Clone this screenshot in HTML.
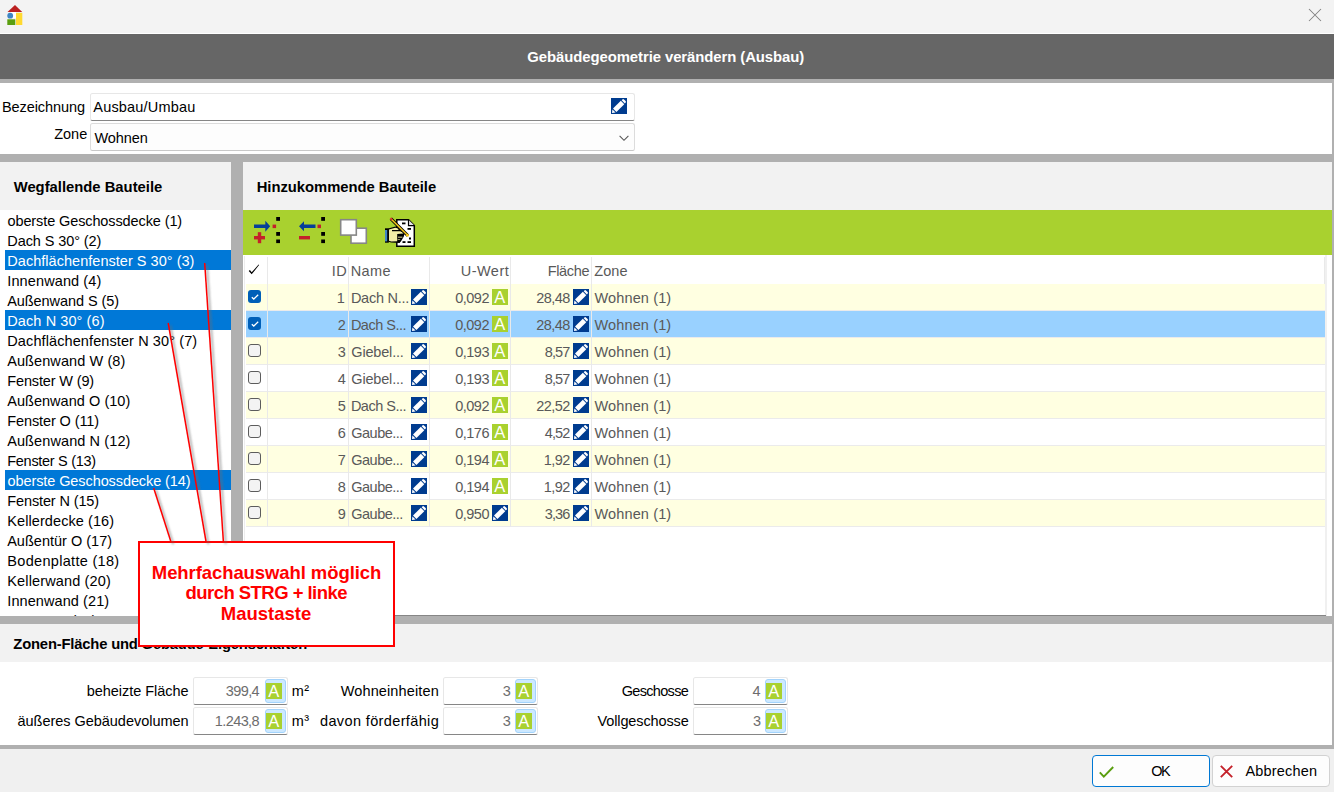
<!DOCTYPE html><html lang="de"><head><meta charset="utf-8"><title>Gebäudegeometrie verändern (Ausbau)</title><style>
*{box-sizing:border-box}
html,body{margin:0;padding:0}
body{width:1334px;height:792px;position:relative;overflow:hidden;background:#b0b0b0;font-family:"Liberation Sans",sans-serif;font-size:14.5px;color:#000}
.abs{position:absolute}
.t{position:absolute;white-space:nowrap;line-height:20px}
.ic{width:16px;height:16px;display:block;position:absolute}
.inp{position:absolute;background:#fff;border:1px solid #e7e7e7;border-bottom:1px solid #868686;border-radius:2.5px}
.hl{position:absolute;left:5px;width:226px;height:20px;background:#0078d7}
.tr{position:absolute;left:246px;width:1079px;height:27px;border-bottom:1px solid #ebebeb}
.tr.o{background:#ffffe1}
.tr.sel{background:#99d1ff}
.vl{position:absolute;width:1px;background:#e9e9e9}
.cb{position:absolute;left:2px;top:6px;width:13px;height:13px;border-radius:3px}
.cb.on{background:#005fb8}
.cb.off{background:#f3f3f3;border:1px solid #5c5c5c}
.abtn{position:absolute;width:21px;height:24px;background:#cce8ff;border:1px solid #a3d3fb;border-radius:3px}
</style></head><body>
<div class="abs" style="left:0;top:0;width:1334px;height:33px;background:#f3f3f3"></div>
<div class="abs" style="left:0;top:33px;width:1334px;height:1px;background:#fff"></div>
<svg class="abs" style="left:7px;top:5px" width="16" height="20" viewBox="0 0 16 20"><polygon points="8,0 15.2,7 0.5,7" fill="#bb2020"/><rect x="0.3" y="7" width="15.4" height="13" fill="#f3f3f3"/><rect x="3" y="7" width="6" height="6" fill="#fff"/><circle cx="3.2" cy="10.7" r="2.9" fill="#3f86c4"/><rect x="0.3" y="14.3" width="8" height="5.7" fill="#5a9e0f"/><rect x="9" y="7.8" width="6.3" height="12.2" fill="#ffd92f"/></svg>
<svg class="abs" style="left:1308px;top:8px" width="14" height="14" viewBox="0 0 14 14"><path d="M1 1 L13 13 M13 1 L1 13" stroke="#808080" stroke-width="1.05" fill="none"/></svg>
<div class="abs" style="left:0;top:34px;width:1334px;height:45px;background:#666"></div>
<div class="t" style="left:527.3px;top:47px;letter-spacing:-0.08px;font-size:14.9px;font-weight:bold;color:#fff">Gebäudegeometrie verändern (Ausbau)</div>
<div class="abs" style="left:0;top:83px;width:1332px;height:71px;background:#fff"></div>
<div class="t" style="left:2.0px;top:97px;letter-spacing:-0.08px">Bezeichnung</div>
<div class="t" style="left:54.2px;top:124px">Zone</div>
<div class="inp" style="left:90px;top:93px;width:545px;height:28px"></div>
<div class="abs" style="left:611px;top:98px"><svg class="ic" viewBox="0 0 16 16"><rect width="16" height="16" fill="#003c8f"/><g transform="rotate(45 8 8)" fill="#fff"><rect x="5.6" y="3" width="4.85" height="11.1"/><path d="M5.75 15.1 H10.25 L8 17.85 Z"/><path d="M5.8 2 V1 Q5.8 -0.1 6.9 -0.1 H9.2 Q10.3 -0.1 10.3 1 V2 Z"/></g></svg></div>
<div class="t" style="left:93.3px;top:97px;letter-spacing:0.19px">Ausbau/Umbau</div>
<div class="inp" style="left:90px;top:123px;width:545px;height:28px;background:#fdfdfd;border-color:#dcdcdc;border-bottom-color:#c9c9c9"></div>
<svg class="abs" style="left:619px;top:134.5px" width="10" height="7" viewBox="0 0 10 7"><path d="M0.6 0.9 L5 5.3 L9.4 0.9" stroke="#555" stroke-width="1.1" fill="none"/></svg>
<div class="t" style="left:94.5px;top:128px;letter-spacing:-0.10px">Wohnen</div>
<div class="abs" style="left:0;top:162px;width:231px;height:48px;background:#f2f2f2"></div>
<div class="t" style="left:13.7px;top:176.5px;font-size:14.8px;font-weight:bold">Wegfallende Bauteile</div>
<div class="abs" style="left:0;top:210px;width:231px;height:406px;background:#fff"></div>
<div class="hl" style="top:250px"></div>
<div class="hl" style="top:310px"></div>
<div class="hl" style="top:470px"></div>
<div class="t" style="left:7.5px;top:211px;letter-spacing:-0.11px">oberste Geschossdecke (1)</div>
<div class="t" style="left:7.3px;top:231px;letter-spacing:-0.09px">Dach S 30° (2)</div>
<div class="t" style="left:7.3px;top:251px;letter-spacing:0.03px;color:#fff">Dachflächenfenster S 30° (3)</div>
<div class="t" style="left:7.3px;top:271px;letter-spacing:0.11px">Innenwand (4)</div>
<div class="t" style="left:7.2px;top:291px;letter-spacing:-0.06px">Außenwand S (5)</div>
<div class="t" style="left:7.3px;top:311px;letter-spacing:0.09px;color:#fff">Dach N 30° (6)</div>
<div class="t" style="left:7.3px;top:331px;letter-spacing:0.10px">Dachflächenfenster N 30° (7)</div>
<div class="t" style="left:7.2px;top:351px;letter-spacing:0.09px">Außenwand W (8)</div>
<div class="t" style="left:7.3px;top:371px;letter-spacing:-0.15px">Fenster W (9)</div>
<div class="t" style="left:7.2px;top:391px;letter-spacing:0.04px">Außenwand O (10)</div>
<div class="t" style="left:7.3px;top:411px;letter-spacing:-0.11px">Fenster O (11)</div>
<div class="t" style="left:7.2px;top:431px;letter-spacing:0.10px">Außenwand N (12)</div>
<div class="t" style="left:7.3px;top:451px;letter-spacing:-0.30px">Fenster S (13)</div>
<div class="t" style="left:7.5px;top:471px;letter-spacing:-0.09px;color:#fff">oberste Geschossdecke (14)</div>
<div class="t" style="left:7.3px;top:491px;letter-spacing:-0.13px">Fenster N (15)</div>
<div class="t" style="left:7.3px;top:511px;letter-spacing:0.08px">Kellerdecke (16)</div>
<div class="t" style="left:7.2px;top:531px;letter-spacing:0.01px">Außentür O (17)</div>
<div class="t" style="left:7.3px;top:551px;letter-spacing:0.31px">Bodenplatte (18)</div>
<div class="t" style="left:7.3px;top:571px;letter-spacing:0.14px">Kellerwand (20)</div>
<div class="t" style="left:7.3px;top:591px;letter-spacing:0.08px">Innenwand (21)</div>
<div class="abs" style="left:0;top:606px;width:231px;height:10px;overflow:hidden"><div class="t" style="left:7.3px;top:4.5px;letter-spacing:-0.26px">Fenster S (22)</div></div>
<div class="abs" style="left:243px;top:162px;width:1089px;height:48px;background:#f2f2f2"></div>
<div class="t" style="left:256.7px;top:176.5px;letter-spacing:-0.03px;font-size:14.8px;font-weight:bold">Hinzukommende Bauteile</div>
<div class="abs" style="left:243px;top:210px;width:1089px;height:45px;background:#a9d12f"></div>
<svg class="abs" style="left:250px;top:214px" width="172" height="36" viewBox="250 214 172 36">
<g fill="#000"><rect x="276.2" y="217" width="3.8" height="3.8"/><rect x="276.2" y="232" width="3.8" height="3.8"/><rect x="276.2" y="239.5" width="3.8" height="3.6"/>
<rect x="321.2" y="217" width="3.8" height="3.8"/><rect x="321.2" y="232" width="3.8" height="3.8"/><rect x="321.2" y="239.5" width="3.8" height="3.6"/></g>
<g fill="#c4212a"><rect x="272.6" y="224.6" width="3.5" height="3.5"/><rect x="317.5" y="224.6" width="3.5" height="3.5"/>
<rect x="254" y="236" width="11" height="3.4"/><rect x="257.8" y="232.2" width="3.4" height="11"/>
<rect x="299" y="236" width="11" height="3.4"/></g>
<g fill="#063f99"><path d="M254 224.6 H265.3 V220.8 L270.2 226.3 L265.3 231.8 V228.1 H254 Z"/>
<path d="M315.5 224.6 H304 V221.3 L299 226.3 L304 231.3 V228.1 H315.5 Z"/></g>
<rect x="351" y="228.2" width="15.3" height="15" fill="#fff" stroke="#878787" stroke-width="1.6"/>
<rect x="340.7" y="219.7" width="15.6" height="15.4" fill="#fff" stroke="#878787" stroke-width="1.6"/>
<path d="M396.8 219.8 H408.5 L414.3 225.6 V246.3 H396.8 Z" fill="#fff" stroke="#000" stroke-width="1.5"/>
<path d="M408.5 219.8 V225.6 H414.3" fill="#e8e8e8" stroke="#000" stroke-width="1.2"/>
<g fill="#000"><rect x="402" y="222.5" width="3.5" height="1.8"/><rect x="407.5" y="228" width="3.5" height="1.8"/><rect x="409" y="237.5" width="2" height="2"/><rect x="402.5" y="241.2" width="3" height="1.8"/><rect x="407.5" y="241.2" width="3.5" height="1.8"/></g>
<path d="M388.2 228.5 L395.4 226.5 L398 227.2 L400.6 230 L404.4 232.2 L404.4 234.3 L403.7 236.8 L402.2 239.2 L401 241.2 L399.6 242.9 L391 242.6 L388.2 241.5 Z" fill="#000"/>
<path d="M389 229.6 L395.3 227.7 L397.4 228.3 L398.8 229.9 L392 229.9 L392 231.3 L400.2 231.3 L403.4 232.8 L403.4 233.6 L397.2 233.9 L397.2 241.2 L391.3 241.5 L389 240.7 Z" fill="#f3eea6"/>
<rect x="398" y="236.7" width="4.4" height="0.9" fill="#f3eea6"/>
<rect x="397.6" y="239" width="2.6" height="0.7" fill="#d8d494"/>
<rect x="385" y="228.3" width="3.8" height="14.4" fill="#000"/><rect x="385" y="230" width="2.2" height="11.4" fill="#3f86c4"/>
<path d="M390.8 218.6 L407.8 235.6" stroke="#000" stroke-width="3.2"/>
<path d="M390.4 218.2 L407 234.8" stroke="#f5c71a" stroke-width="1.6"/>
<path d="M390.4 218.2 L392.2 220" stroke="#d63a2a" stroke-width="1.9"/>
<circle cx="407.4" cy="235.2" r="1.5" fill="#f5c71a"/>
</svg>
<div class="abs" style="left:246px;top:255px;width:1086px;height:361px;background:#fff"></div>
<div class="abs" style="left:243px;top:255px;width:3px;height:361px;background:#fff"></div><div class="vl" style="left:244px;top:256px;height:360px;background:#ececec"></div>
<svg class="abs" style="left:248px;top:263px" width="12" height="12" viewBox="248 262.7 12 12"><path d="M248.7 270.6 L249.9 269.6 L251.7 272 L258.6 264.3 L259.1 264.8 L251.7 274 Z" fill="#000"/></svg>
<div class="t" style="left:331.7px;top:261px;letter-spacing:0.57px;color:#595959">ID</div>
<div class="t" style="left:350.7px;top:261px;letter-spacing:0.40px;color:#595959">Name</div>
<div class="t" style="left:460.7px;top:261px;letter-spacing:0.48px;color:#595959">U-Wert</div>
<div class="t" style="left:547.7px;top:261px;letter-spacing:-0.33px;color:#595959">Fläche</div>
<div class="t" style="left:594.2px;top:261px;letter-spacing:0.10px;color:#595959">Zone</div>
<div class="tr o" style="top:284px">
<div class="cb on"><svg class="abs" style="left:3px;top:4px" width="8" height="6" viewBox="0 0 8 6"><path d="M0.8 3.2 L2.8 5 L7.2 0.8" stroke="#fff" stroke-width="1.3" fill="none"/></svg></div>
<div class="abs" style="left:165px;top:5px"><svg class="ic" viewBox="0 0 16 16"><rect width="16" height="16" fill="#003c8f"/><g transform="rotate(45 8 8)" fill="#fff"><rect x="5.6" y="3" width="4.85" height="11.1"/><path d="M5.75 15.1 H10.25 L8 17.85 Z"/><path d="M5.8 2 V1 Q5.8 -0.1 6.9 -0.1 H9.2 Q10.3 -0.1 10.3 1 V2 Z"/></g></svg></div>
<div class="abs" style="left:246px;top:5px"><svg class="ic" viewBox="0 0 16 16"><rect width="16" height="16" fill="#a9d12f"/><text x="7.7" y="13.6" text-anchor="middle" font-family="Liberation Sans, sans-serif" font-size="16.5" fill="#fff">A</text></svg></div>
<div class="abs" style="left:327px;top:5px"><svg class="ic" viewBox="0 0 16 16"><rect width="16" height="16" fill="#003c8f"/><g transform="rotate(45 8 8)" fill="#fff"><rect x="5.6" y="3" width="4.85" height="11.1"/><path d="M5.75 15.1 H10.25 L8 17.85 Z"/><path d="M5.8 2 V1 Q5.8 -0.1 6.9 -0.1 H9.2 Q10.3 -0.1 10.3 1 V2 Z"/></g></svg></div>
</div>
<div class="t" style="left:336.8px;top:288px;color:#595959">1</div>
<div class="t" style="left:350.9px;top:288px;letter-spacing:-0.25px;color:#595959">Dach N...</div>
<div class="t" style="left:455.3px;top:288px;letter-spacing:-0.53px;color:#595959">0,092</div>
<div class="t" style="left:536.3px;top:288px;letter-spacing:-0.56px;color:#595959">28,48</div>
<div class="t" style="left:594.5px;top:288px;letter-spacing:0.13px;color:#595959">Wohnen (1)</div>
<div class="tr sel" style="top:311px">
<div class="cb on"><svg class="abs" style="left:3px;top:4px" width="8" height="6" viewBox="0 0 8 6"><path d="M0.8 3.2 L2.8 5 L7.2 0.8" stroke="#fff" stroke-width="1.3" fill="none"/></svg></div>
<div class="abs" style="left:165px;top:5px"><svg class="ic" viewBox="0 0 16 16"><rect width="16" height="16" fill="#003c8f"/><g transform="rotate(45 8 8)" fill="#fff"><rect x="5.6" y="3" width="4.85" height="11.1"/><path d="M5.75 15.1 H10.25 L8 17.85 Z"/><path d="M5.8 2 V1 Q5.8 -0.1 6.9 -0.1 H9.2 Q10.3 -0.1 10.3 1 V2 Z"/></g></svg></div>
<div class="abs" style="left:246px;top:5px"><svg class="ic" viewBox="0 0 16 16"><rect width="16" height="16" fill="#a9d12f"/><text x="7.7" y="13.6" text-anchor="middle" font-family="Liberation Sans, sans-serif" font-size="16.5" fill="#fff">A</text></svg></div>
<div class="abs" style="left:327px;top:5px"><svg class="ic" viewBox="0 0 16 16"><rect width="16" height="16" fill="#003c8f"/><g transform="rotate(45 8 8)" fill="#fff"><rect x="5.6" y="3" width="4.85" height="11.1"/><path d="M5.75 15.1 H10.25 L8 17.85 Z"/><path d="M5.8 2 V1 Q5.8 -0.1 6.9 -0.1 H9.2 Q10.3 -0.1 10.3 1 V2 Z"/></g></svg></div>
</div>
<div class="t" style="left:337.8px;top:315px;color:#595959">2</div>
<div class="t" style="left:350.9px;top:315px;letter-spacing:-0.50px;color:#595959">Dach S...</div>
<div class="t" style="left:455.3px;top:315px;letter-spacing:-0.53px;color:#595959">0,092</div>
<div class="t" style="left:536.3px;top:315px;letter-spacing:-0.56px;color:#595959">28,48</div>
<div class="t" style="left:594.5px;top:315px;letter-spacing:0.13px;color:#595959">Wohnen (1)</div>
<div class="tr o" style="top:338px">
<div class="cb off"></div>
<div class="abs" style="left:165px;top:5px"><svg class="ic" viewBox="0 0 16 16"><rect width="16" height="16" fill="#003c8f"/><g transform="rotate(45 8 8)" fill="#fff"><rect x="5.6" y="3" width="4.85" height="11.1"/><path d="M5.75 15.1 H10.25 L8 17.85 Z"/><path d="M5.8 2 V1 Q5.8 -0.1 6.9 -0.1 H9.2 Q10.3 -0.1 10.3 1 V2 Z"/></g></svg></div>
<div class="abs" style="left:246px;top:5px"><svg class="ic" viewBox="0 0 16 16"><rect width="16" height="16" fill="#a9d12f"/><text x="7.7" y="13.6" text-anchor="middle" font-family="Liberation Sans, sans-serif" font-size="16.5" fill="#fff">A</text></svg></div>
<div class="abs" style="left:327px;top:5px"><svg class="ic" viewBox="0 0 16 16"><rect width="16" height="16" fill="#003c8f"/><g transform="rotate(45 8 8)" fill="#fff"><rect x="5.6" y="3" width="4.85" height="11.1"/><path d="M5.75 15.1 H10.25 L8 17.85 Z"/><path d="M5.8 2 V1 Q5.8 -0.1 6.9 -0.1 H9.2 Q10.3 -0.1 10.3 1 V2 Z"/></g></svg></div>
</div>
<div class="t" style="left:337.8px;top:342px;color:#595959">3</div>
<div class="t" style="left:351.3px;top:342px;letter-spacing:-0.18px;color:#595959">Giebel...</div>
<div class="t" style="left:455.3px;top:342px;letter-spacing:-0.53px;color:#595959">0,193</div>
<div class="t" style="left:544.7px;top:342px;letter-spacing:-0.85px;color:#595959">8,57</div>
<div class="t" style="left:594.5px;top:342px;letter-spacing:0.13px;color:#595959">Wohnen (1)</div>
<div class="tr" style="top:365px">
<div class="cb off"></div>
<div class="abs" style="left:165px;top:5px"><svg class="ic" viewBox="0 0 16 16"><rect width="16" height="16" fill="#003c8f"/><g transform="rotate(45 8 8)" fill="#fff"><rect x="5.6" y="3" width="4.85" height="11.1"/><path d="M5.75 15.1 H10.25 L8 17.85 Z"/><path d="M5.8 2 V1 Q5.8 -0.1 6.9 -0.1 H9.2 Q10.3 -0.1 10.3 1 V2 Z"/></g></svg></div>
<div class="abs" style="left:246px;top:5px"><svg class="ic" viewBox="0 0 16 16"><rect width="16" height="16" fill="#a9d12f"/><text x="7.7" y="13.6" text-anchor="middle" font-family="Liberation Sans, sans-serif" font-size="16.5" fill="#fff">A</text></svg></div>
<div class="abs" style="left:327px;top:5px"><svg class="ic" viewBox="0 0 16 16"><rect width="16" height="16" fill="#003c8f"/><g transform="rotate(45 8 8)" fill="#fff"><rect x="5.6" y="3" width="4.85" height="11.1"/><path d="M5.75 15.1 H10.25 L8 17.85 Z"/><path d="M5.8 2 V1 Q5.8 -0.1 6.9 -0.1 H9.2 Q10.3 -0.1 10.3 1 V2 Z"/></g></svg></div>
</div>
<div class="t" style="left:337.8px;top:369px;color:#595959">4</div>
<div class="t" style="left:351.3px;top:369px;letter-spacing:-0.18px;color:#595959">Giebel...</div>
<div class="t" style="left:455.3px;top:369px;letter-spacing:-0.53px;color:#595959">0,193</div>
<div class="t" style="left:544.7px;top:369px;letter-spacing:-0.85px;color:#595959">8,57</div>
<div class="t" style="left:594.5px;top:369px;letter-spacing:0.13px;color:#595959">Wohnen (1)</div>
<div class="tr o" style="top:392px">
<div class="cb off"></div>
<div class="abs" style="left:165px;top:5px"><svg class="ic" viewBox="0 0 16 16"><rect width="16" height="16" fill="#003c8f"/><g transform="rotate(45 8 8)" fill="#fff"><rect x="5.6" y="3" width="4.85" height="11.1"/><path d="M5.75 15.1 H10.25 L8 17.85 Z"/><path d="M5.8 2 V1 Q5.8 -0.1 6.9 -0.1 H9.2 Q10.3 -0.1 10.3 1 V2 Z"/></g></svg></div>
<div class="abs" style="left:246px;top:5px"><svg class="ic" viewBox="0 0 16 16"><rect width="16" height="16" fill="#a9d12f"/><text x="7.7" y="13.6" text-anchor="middle" font-family="Liberation Sans, sans-serif" font-size="16.5" fill="#fff">A</text></svg></div>
<div class="abs" style="left:327px;top:5px"><svg class="ic" viewBox="0 0 16 16"><rect width="16" height="16" fill="#003c8f"/><g transform="rotate(45 8 8)" fill="#fff"><rect x="5.6" y="3" width="4.85" height="11.1"/><path d="M5.75 15.1 H10.25 L8 17.85 Z"/><path d="M5.8 2 V1 Q5.8 -0.1 6.9 -0.1 H9.2 Q10.3 -0.1 10.3 1 V2 Z"/></g></svg></div>
</div>
<div class="t" style="left:337.8px;top:396px;color:#595959">5</div>
<div class="t" style="left:350.9px;top:396px;letter-spacing:-0.50px;color:#595959">Dach S...</div>
<div class="t" style="left:455.3px;top:396px;letter-spacing:-0.53px;color:#595959">0,092</div>
<div class="t" style="left:536.3px;top:396px;letter-spacing:-0.56px;color:#595959">22,52</div>
<div class="t" style="left:594.5px;top:396px;letter-spacing:0.13px;color:#595959">Wohnen (1)</div>
<div class="tr" style="top:419px">
<div class="cb off"></div>
<div class="abs" style="left:165px;top:5px"><svg class="ic" viewBox="0 0 16 16"><rect width="16" height="16" fill="#003c8f"/><g transform="rotate(45 8 8)" fill="#fff"><rect x="5.6" y="3" width="4.85" height="11.1"/><path d="M5.75 15.1 H10.25 L8 17.85 Z"/><path d="M5.8 2 V1 Q5.8 -0.1 6.9 -0.1 H9.2 Q10.3 -0.1 10.3 1 V2 Z"/></g></svg></div>
<div class="abs" style="left:246px;top:5px"><svg class="ic" viewBox="0 0 16 16"><rect width="16" height="16" fill="#a9d12f"/><text x="7.7" y="13.6" text-anchor="middle" font-family="Liberation Sans, sans-serif" font-size="16.5" fill="#fff">A</text></svg></div>
<div class="abs" style="left:327px;top:5px"><svg class="ic" viewBox="0 0 16 16"><rect width="16" height="16" fill="#003c8f"/><g transform="rotate(45 8 8)" fill="#fff"><rect x="5.6" y="3" width="4.85" height="11.1"/><path d="M5.75 15.1 H10.25 L8 17.85 Z"/><path d="M5.8 2 V1 Q5.8 -0.1 6.9 -0.1 H9.2 Q10.3 -0.1 10.3 1 V2 Z"/></g></svg></div>
</div>
<div class="t" style="left:337.8px;top:423px;color:#595959">6</div>
<div class="t" style="left:351.3px;top:423px;letter-spacing:-0.51px;color:#595959">Gaube...</div>
<div class="t" style="left:455.3px;top:423px;letter-spacing:-0.53px;color:#595959">0,176</div>
<div class="t" style="left:544.7px;top:423px;letter-spacing:-0.85px;color:#595959">4,52</div>
<div class="t" style="left:594.5px;top:423px;letter-spacing:0.13px;color:#595959">Wohnen (1)</div>
<div class="tr o" style="top:446px">
<div class="cb off"></div>
<div class="abs" style="left:165px;top:5px"><svg class="ic" viewBox="0 0 16 16"><rect width="16" height="16" fill="#003c8f"/><g transform="rotate(45 8 8)" fill="#fff"><rect x="5.6" y="3" width="4.85" height="11.1"/><path d="M5.75 15.1 H10.25 L8 17.85 Z"/><path d="M5.8 2 V1 Q5.8 -0.1 6.9 -0.1 H9.2 Q10.3 -0.1 10.3 1 V2 Z"/></g></svg></div>
<div class="abs" style="left:246px;top:5px"><svg class="ic" viewBox="0 0 16 16"><rect width="16" height="16" fill="#a9d12f"/><text x="7.7" y="13.6" text-anchor="middle" font-family="Liberation Sans, sans-serif" font-size="16.5" fill="#fff">A</text></svg></div>
<div class="abs" style="left:327px;top:5px"><svg class="ic" viewBox="0 0 16 16"><rect width="16" height="16" fill="#003c8f"/><g transform="rotate(45 8 8)" fill="#fff"><rect x="5.6" y="3" width="4.85" height="11.1"/><path d="M5.75 15.1 H10.25 L8 17.85 Z"/><path d="M5.8 2 V1 Q5.8 -0.1 6.9 -0.1 H9.2 Q10.3 -0.1 10.3 1 V2 Z"/></g></svg></div>
</div>
<div class="t" style="left:337.8px;top:450px;color:#595959">7</div>
<div class="t" style="left:351.3px;top:450px;letter-spacing:-0.51px;color:#595959">Gaube...</div>
<div class="t" style="left:455.3px;top:450px;letter-spacing:-0.53px;color:#595959">0,194</div>
<div class="t" style="left:543.7px;top:450px;letter-spacing:-0.52px;color:#595959">1,92</div>
<div class="t" style="left:594.5px;top:450px;letter-spacing:0.13px;color:#595959">Wohnen (1)</div>
<div class="tr" style="top:473px">
<div class="cb off"></div>
<div class="abs" style="left:165px;top:5px"><svg class="ic" viewBox="0 0 16 16"><rect width="16" height="16" fill="#003c8f"/><g transform="rotate(45 8 8)" fill="#fff"><rect x="5.6" y="3" width="4.85" height="11.1"/><path d="M5.75 15.1 H10.25 L8 17.85 Z"/><path d="M5.8 2 V1 Q5.8 -0.1 6.9 -0.1 H9.2 Q10.3 -0.1 10.3 1 V2 Z"/></g></svg></div>
<div class="abs" style="left:246px;top:5px"><svg class="ic" viewBox="0 0 16 16"><rect width="16" height="16" fill="#a9d12f"/><text x="7.7" y="13.6" text-anchor="middle" font-family="Liberation Sans, sans-serif" font-size="16.5" fill="#fff">A</text></svg></div>
<div class="abs" style="left:327px;top:5px"><svg class="ic" viewBox="0 0 16 16"><rect width="16" height="16" fill="#003c8f"/><g transform="rotate(45 8 8)" fill="#fff"><rect x="5.6" y="3" width="4.85" height="11.1"/><path d="M5.75 15.1 H10.25 L8 17.85 Z"/><path d="M5.8 2 V1 Q5.8 -0.1 6.9 -0.1 H9.2 Q10.3 -0.1 10.3 1 V2 Z"/></g></svg></div>
</div>
<div class="t" style="left:337.8px;top:477px;color:#595959">8</div>
<div class="t" style="left:351.3px;top:477px;letter-spacing:-0.51px;color:#595959">Gaube...</div>
<div class="t" style="left:455.3px;top:477px;letter-spacing:-0.53px;color:#595959">0,194</div>
<div class="t" style="left:543.7px;top:477px;letter-spacing:-0.52px;color:#595959">1,92</div>
<div class="t" style="left:594.5px;top:477px;letter-spacing:0.13px;color:#595959">Wohnen (1)</div>
<div class="tr o" style="top:500px">
<div class="cb off"></div>
<div class="abs" style="left:165px;top:5px"><svg class="ic" viewBox="0 0 16 16"><rect width="16" height="16" fill="#003c8f"/><g transform="rotate(45 8 8)" fill="#fff"><rect x="5.6" y="3" width="4.85" height="11.1"/><path d="M5.75 15.1 H10.25 L8 17.85 Z"/><path d="M5.8 2 V1 Q5.8 -0.1 6.9 -0.1 H9.2 Q10.3 -0.1 10.3 1 V2 Z"/></g></svg></div>
<div class="abs" style="left:246px;top:5px"><svg class="ic" viewBox="0 0 16 16"><rect width="16" height="16" fill="#003c8f"/><g transform="rotate(45 8 8)" fill="#fff"><rect x="5.6" y="3" width="4.85" height="11.1"/><path d="M5.75 15.1 H10.25 L8 17.85 Z"/><path d="M5.8 2 V1 Q5.8 -0.1 6.9 -0.1 H9.2 Q10.3 -0.1 10.3 1 V2 Z"/></g></svg></div>
<div class="abs" style="left:327px;top:5px"><svg class="ic" viewBox="0 0 16 16"><rect width="16" height="16" fill="#003c8f"/><g transform="rotate(45 8 8)" fill="#fff"><rect x="5.6" y="3" width="4.85" height="11.1"/><path d="M5.75 15.1 H10.25 L8 17.85 Z"/><path d="M5.8 2 V1 Q5.8 -0.1 6.9 -0.1 H9.2 Q10.3 -0.1 10.3 1 V2 Z"/></g></svg></div>
</div>
<div class="t" style="left:337.8px;top:504px;color:#595959">9</div>
<div class="t" style="left:351.3px;top:504px;letter-spacing:-0.51px;color:#595959">Gaube...</div>
<div class="t" style="left:455.3px;top:504px;letter-spacing:-0.53px;color:#595959">0,950</div>
<div class="t" style="left:544.7px;top:504px;letter-spacing:-0.85px;color:#595959">3,36</div>
<div class="t" style="left:594.5px;top:504px;letter-spacing:0.13px;color:#595959">Wohnen (1)</div>
<div class="vl" style="left:267px;top:257px;height:270px"></div>
<div class="vl" style="left:348px;top:257px;height:270px"></div>
<div class="vl" style="left:429px;top:257px;height:270px"></div>
<div class="vl" style="left:510px;top:257px;height:270px"></div>
<div class="vl" style="left:591px;top:257px;height:270px"></div>
<div class="vl" style="left:1324px;top:257px;height:27px"></div><div class="vl" style="left:1325px;top:255px;width:2px;height:361px;background:#f0f0f0"></div>
<div class="abs" style="left:244px;top:615px;width:1082px;height:1px;background:#868686"></div>
<div class="abs" style="left:0;top:624px;width:1332px;height:38px;background:#f2f2f2"></div>
<div class="t" style="left:13.3px;top:633.5px;letter-spacing:-0.19px;font-size:14.8px;font-weight:bold">Zonen-Fläche und Gebäude-Eigenschaften</div>
<div class="abs" style="left:0;top:662px;width:1332px;height:83px;background:#fff"></div>
<div class="t" style="left:86.7px;top:681px;letter-spacing:-0.04px">beheizte Fläche</div>
<div class="inp" style="left:193px;top:677px;width:95px;height:28px"></div>
<div class="t" style="left:225.7px;top:681px;letter-spacing:-0.58px;color:#6d6d6d">399,4</div>
<div class="abtn" style="left:265px;top:679px"></div>
<div class="abs" style="left:266px;top:683px"><svg class="ic" viewBox="0 0 16 16"><rect width="16" height="16" fill="#a9d12f"/><text x="7.7" y="13.6" text-anchor="middle" font-family="Liberation Sans, sans-serif" font-size="16.5" fill="#fff">A</text></svg></div>
<div class="t" style="left:291.8px;top:681px;letter-spacing:0.32px">m<span style="position:relative;top:-1.3px">²</span></div>
<div class="t" style="left:17.5px;top:711px;letter-spacing:-0.03px">äußeres Gebäudevolumen</div>
<div class="inp" style="left:193px;top:707px;width:95px;height:28px"></div>
<div class="t" style="left:214.7px;top:711px;letter-spacing:-0.57px;color:#6d6d6d">1.243,8</div>
<div class="abtn" style="left:265px;top:709px"></div>
<div class="abs" style="left:266px;top:713px"><svg class="ic" viewBox="0 0 16 16"><rect width="16" height="16" fill="#a9d12f"/><text x="7.7" y="13.6" text-anchor="middle" font-family="Liberation Sans, sans-serif" font-size="16.5" fill="#fff">A</text></svg></div>
<div class="t" style="left:291.8px;top:711px;letter-spacing:0.32px">m<span style="position:relative;top:-1.3px">³</span></div>
<div class="t" style="left:340.7px;top:681px;letter-spacing:0.13px">Wohneinheiten</div>
<div class="inp" style="left:443px;top:677px;width:95px;height:28px"></div>
<div class="t" style="left:502.8px;top:681px;color:#6d6d6d">3</div>
<div class="abtn" style="left:515px;top:679px"></div>
<div class="abs" style="left:516px;top:683px"><svg class="ic" viewBox="0 0 16 16"><rect width="16" height="16" fill="#a9d12f"/><text x="7.7" y="13.6" text-anchor="middle" font-family="Liberation Sans, sans-serif" font-size="16.5" fill="#fff">A</text></svg></div>
<div class="t" style="left:320.0px;top:711px;letter-spacing:0.37px">davon förderfähig</div>
<div class="inp" style="left:443px;top:707px;width:95px;height:28px"></div>
<div class="t" style="left:502.8px;top:711px;color:#6d6d6d">3</div>
<div class="abtn" style="left:515px;top:709px"></div>
<div class="abs" style="left:516px;top:713px"><svg class="ic" viewBox="0 0 16 16"><rect width="16" height="16" fill="#a9d12f"/><text x="7.7" y="13.6" text-anchor="middle" font-family="Liberation Sans, sans-serif" font-size="16.5" fill="#fff">A</text></svg></div>
<div class="t" style="left:621.7px;top:681px;letter-spacing:-0.68px">Geschosse</div>
<div class="inp" style="left:693px;top:677px;width:95px;height:28px"></div>
<div class="t" style="left:752.6px;top:681px;color:#6d6d6d">4</div>
<div class="abtn" style="left:765px;top:679px"></div>
<div class="abs" style="left:766px;top:683px"><svg class="ic" viewBox="0 0 16 16"><rect width="16" height="16" fill="#a9d12f"/><text x="7.7" y="13.6" text-anchor="middle" font-family="Liberation Sans, sans-serif" font-size="16.5" fill="#fff">A</text></svg></div>
<div class="t" style="left:597.5px;top:711px;letter-spacing:-0.12px">Vollgeschosse</div>
<div class="inp" style="left:693px;top:707px;width:95px;height:28px"></div>
<div class="t" style="left:753.0px;top:711px;color:#6d6d6d">3</div>
<div class="abtn" style="left:765px;top:709px"></div>
<div class="abs" style="left:766px;top:713px"><svg class="ic" viewBox="0 0 16 16"><rect width="16" height="16" fill="#a9d12f"/><text x="7.7" y="13.6" text-anchor="middle" font-family="Liberation Sans, sans-serif" font-size="16.5" fill="#fff">A</text></svg></div>
<div class="abs" style="left:0;top:749px;width:1334px;height:43px;background:#f0f0f0"></div>
<div class="abs" style="left:1092px;top:755px;width:118px;height:32px;background:#fdfdfd;border:1px solid #0078d4;border-radius:4px"><svg class="abs" style="left:6px;top:9.5px" width="15" height="12" viewBox="0 0 15 12"><path d="M0.8 6.4 L4.8 10.6 L14.2 1" stroke="#5a9e0f" stroke-width="1.9" fill="none"/></svg></div>
<div class="t" style="left:1151.3px;top:761px;letter-spacing:-1.58px">OK</div>
<div class="abs" style="left:1212px;top:755px;width:118px;height:32px;background:#fdfdfd;border:1px solid #d2d2d2;border-radius:4px"><svg class="abs" style="left:7px;top:8.5px" width="13" height="13" viewBox="0 0 13 13"><path d="M0.8 0.8 L12.2 12.2 M12.2 0.8 L0.8 12.2" stroke="#c4212a" stroke-width="1.9" fill="none"/></svg></div>
<div class="t" style="left:1245.5px;top:761px;letter-spacing:0.18px">Abbrechen</div>
<svg class="abs" style="left:0;top:0" width="500" height="700" viewBox="0 0 500 700">
<defs><filter id="sh" x="-20%" y="-5%" width="140%" height="110%"><feGaussianBlur stdDeviation="0.9"/></filter></defs>
<rect x="139" y="542" width="255" height="104" fill="#fff" stroke="#ff0000" stroke-width="2" shape-rendering="crispEdges"/>
<g stroke="#6e6e6e" stroke-width="1.8" opacity="0.6" fill="none" filter="url(#sh)"><path d="M207 265.3 L225.7 544.3"/><path d="M170.5 325.3 L208.4 544.3"/><path d="M156 490.3 L173.3 544.3"/></g>
<g stroke="#ff0000" stroke-width="1.5" fill="none"><path d="M204.7 263 L223.4 542"/><path d="M168.2 323 L206.1 542"/><path d="M153.7 488 L171 542"/></g>
<g font-family="Liberation Sans, sans-serif" font-weight="bold" font-size="18.5" fill="#ff0000"><text x="151.8" y="579.3" textLength="229.5" lengthAdjust="spacing">Mehrfachauswahl möglich</text><text x="185.5" y="599" textLength="162" lengthAdjust="spacing">durch STRG + linke</text><text x="220.8" y="619.8" textLength="90.5" lengthAdjust="spacing">Maustaste</text></g>
</svg>
</body></html>
